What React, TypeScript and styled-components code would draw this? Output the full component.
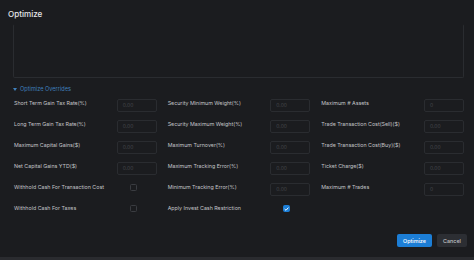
import React from "react";
import styled, { createGlobalStyle } from "styled-components";

const Global = createGlobalStyle`
  html, body { margin: 0; padding: 0; background: #2a2b2f; }
  body { font-family: Inter, "Noto Sans", sans-serif; }
  * { box-sizing: border-box; }
`;

const Modal = styled.div`
  width: 474px;
  height: 257px;
  background: #1b1c1f;
  display: flex;
  flex-direction: column;
`;

const Header = styled.div`
  padding: 8px 8px 0;
`;

const Title = styled.div`
  font-size: 8.1px;
  line-height: 12px;
  font-weight: 500;
  color: #e6e7ea;
`;

const TextArea = styled.div`
  margin: 4px 10px 0 13px;
  height: 54px;
  border: 1px solid #2a2c30;
  border-top-color: transparent;
  border-radius: 2px;
`;

const Toggle = styled.div`
  margin: 6px 0 0 13px;
  height: 10px;
  display: flex;
  align-items: center;
  gap: 3px;
  color: #3f7fbb;
  font-size: 5.6px;
`;

const Grid = styled.div`
  margin-top: 5px;
  padding: 0 10px 0 14px;
  display: grid;
  grid-template-columns: repeat(3, 1fr);
  column-gap: 11px;
  row-gap: 8px;
`;

const Field = styled.div`
  display: flex;
  align-items: flex-start;
  height: 13px;
`;

const Label = styled.div`
  flex: 1;
  font-size: 5.3px;
  line-height: 8px;
  color: #c3c4c8;
  white-space: nowrap;
`;

const Input = styled.div`
  width: 40px;
  height: 13px;
  border: 1px solid #2a2c30;
  border-radius: 2px;
  padding-left: 5px;
  font-size: 5px;
  line-height: 11px;
  color: #45474c;
`;

const CheckCell = styled.div`
  width: 40px;
  height: 13px;
  padding: 1px 0 0 13px;
`;

const Box = styled.div<{ $checked?: boolean }>`
  width: 7px;
  height: 7px;
  border-radius: 1.5px;
  border: 1px solid ${(p) => (p.$checked ? "#1c7ed6" : "#3a3c41")};
  background: ${(p) => (p.$checked ? "#1c7ed6" : "transparent")};
  display: flex;
  align-items: center;
  justify-content: center;
`;

const Footer = styled.div`
  margin-top: 17px;
  padding-right: 7px;
  display: flex;
  justify-content: flex-end;
  gap: 5px;
`;

const Button = styled.button<{ $primary?: boolean }>`
  height: 13px;
  width: ${(p) => (p.$primary ? "35px" : "30px")};
  border: none;
  border-radius: 2px;
  padding: 0;
  font-family: Inter, "Noto Sans", sans-serif;
  font-size: 5.4px;
  font-weight: 500;
  color: ${(p) => (p.$primary ? "#ffffff" : "#c1c2c5")};
  background: ${(p) => (p.$primary ? "#1c7ed6" : "#2c2e33")};
`;

type F = { label: string; value?: string; check?: boolean; checked?: boolean };

const fields: F[] = [
  { label: "Short Term Gain Tax Rate(%)", value: "0.00" },
  { label: "Security Minimum Weight(%)", value: "0.00" },
  { label: "Maximum # Assets", value: "0" },
  { label: "Long Term Gain Tax Rate(%)", value: "0.00" },
  { label: "Security Maximum Weight(%)", value: "0.00" },
  { label: "Trade Transaction Cost(Sell)($)", value: "0.00" },
  { label: "Maximum Capital Gains($)", value: "0.00" },
  { label: "Maximum Turnover(%)", value: "0.00" },
  { label: "Trade Transaction Cost(Buy)($)", value: "0.00" },
  { label: "Net Capital Gains YTD($)", value: "0.00" },
  { label: "Maximum Tracking Error(%)", value: "0.00" },
  { label: "Ticket Charge($)", value: "0.00" },
  { label: "Withhold Cash For Transaction Cost", check: true },
  { label: "Minimum Tracking Error(%)", value: "0.00" },
  { label: "Maximum # Trades", value: "0" },
  { label: "Withhold Cash For Taxes", check: true },
  { label: "Apply Invest Cash Restriction", check: true, checked: true },
];

export default function App() {
  return (
    <>
      <Global />
      <Modal>
        <Header>
          <Title>Optimize</Title>
        </Header>
        <TextArea />
        <Toggle>
          <svg width="4" height="3" viewBox="0 0 4 3">
            <path d="M0 0 L4 0 L2 3 Z" fill="#3f7fbb" />
          </svg>
          Optimize Overrides
        </Toggle>
        <Grid>
          {fields.map((f) => (
            <Field key={f.label}>
              <Label>{f.label}</Label>
              {f.check ? (
                <CheckCell>
                  <Box $checked={f.checked}>
                    {f.checked && (
                      <svg width="5" height="4" viewBox="0 0 5 4">
                        <path d="M0.6 2 L2 3.3 L4.4 0.6" stroke="#fff" strokeWidth="1" fill="none" />
                      </svg>
                    )}
                  </Box>
                </CheckCell>
              ) : (
                <Input>{f.value}</Input>
              )}
            </Field>
          ))}
        </Grid>
        <Footer>
          <Button $primary>Optimize</Button>
          <Button>Cancel</Button>
        </Footer>
      </Modal>
    </>
  );
}
